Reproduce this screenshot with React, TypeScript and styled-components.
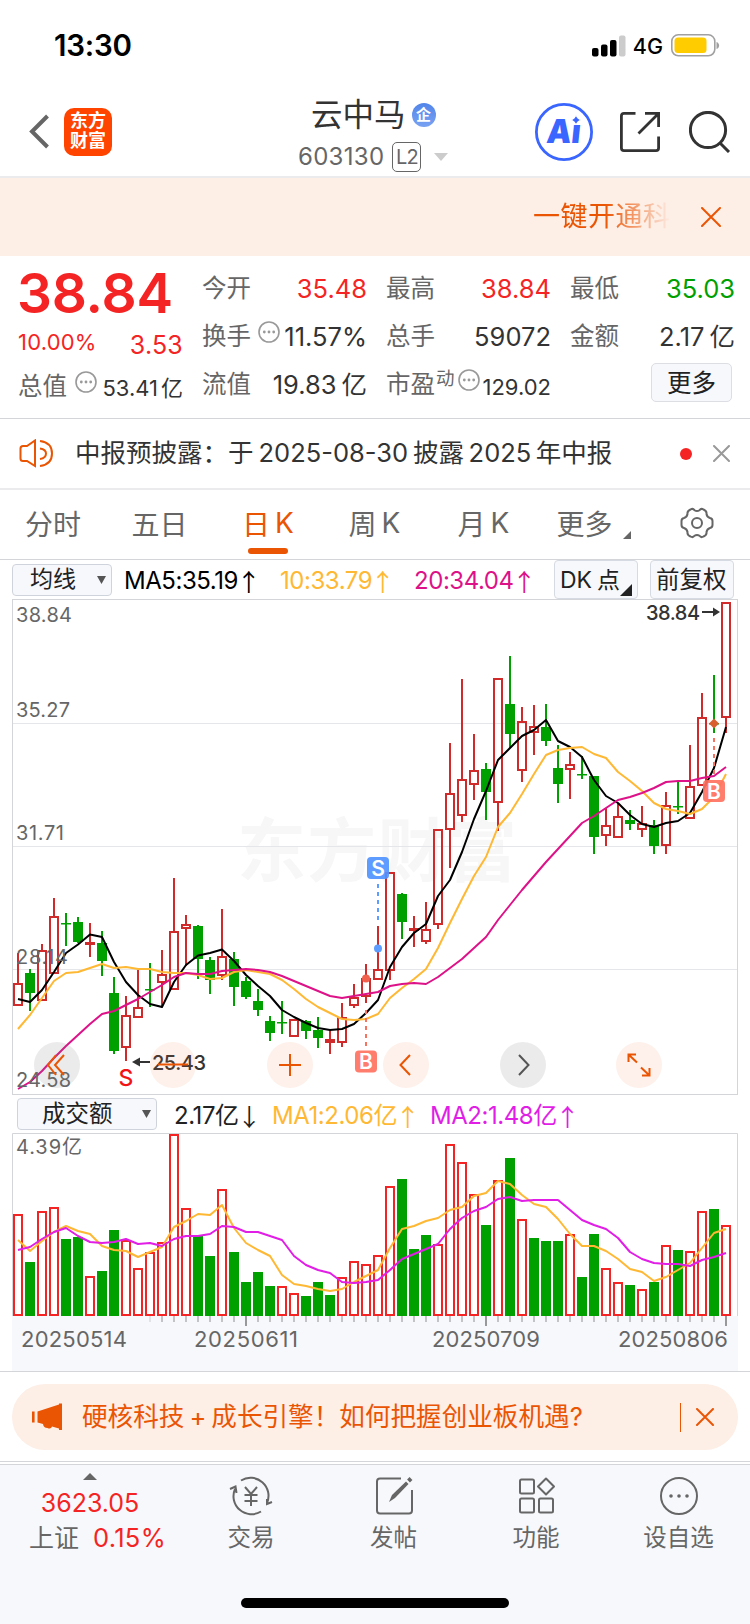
import React from "react";
import styled, { createGlobalStyle } from "styled-components";

const C = {
  red: "#f52424",
  green: "#00a000",
  orange: "#ea5504",
  grey: "#666",
  dark: "#333",
  line: "#d3d5d9",
  panel: "#f7f8fb",
  peach: "#fdeee6",
  amber: "#ffb833",
  pink: "#dd1288",
  violet: "#e01ee6",
};

const Global = createGlobalStyle`
  * { box-sizing: border-box; }
  body { margin: 0; background: #fff; }
  svg { display: block; flex: none; }
`;

const Page = styled.div`
  width: 750px;
  height: 1624px;
  display: flex;
  flex-direction: column;
  background: #fff;
  color: ${C.dark};
  font-family: Inter, "Noto Sans CJK SC", sans-serif;
  overflow: hidden;
`;

const Txt = styled.span<{ $s: number; $c?: string; $w?: number; $ls?: number; $ml?: number; $mt?: number }>`
  display: block;
  flex: none;
  white-space: nowrap;
  line-height: 1.2;
  font-size: ${(p) => p.$s}px;
  color: ${(p) => p.$c ?? C.dark};
  font-weight: ${(p) => p.$w ?? 400};
  letter-spacing: ${(p) => p.$ls ?? 0}px;
  margin-left: ${(p) => p.$ml ?? 0}px;
  margin-top: ${(p) => p.$mt ?? 0}px;
`;

/* a run set off from its neighbours by a small gap where scripts meet */
const Run = styled.span<{ $l?: number; $r?: number }>`
  margin-left: ${(p) => p.$l ?? 0}px;
  margin-right: ${(p) => p.$r ?? 0}px;
`;

/* ---------- status bar ---------- */
const StatusBar = styled.div`
  height: 90px;
  flex: none;
  display: flex;
  align-items: center;
  padding: 2px 30px 0 54px;
`;
const StatusIcons = styled.div`
  margin-left: auto;
  display: flex;
  align-items: center;
`;
const Battery = styled.svg`
  margin-left: 8px;
`;

/* ---------- header ---------- */
const Header = styled.header`
  height: 88px;
  flex: none;
  display: grid;
  grid-template-columns: 260px 1fr 260px;
  border-bottom: 2px solid #ebebed;
`;
const HeaderLeft = styled.div`
  display: flex;
  align-items: center;
  padding: 0 0 2px 28px;
`;
const Logo = styled.div`
  width: 48px;
  height: 48px;
  margin-left: 14px;
  border-radius: 10px;
  background: #ff4400;
  color: #fff;
  font-weight: 700;
  font-size: 18px;
  line-height: 20px;
  text-align: center;
  padding-top: 3px;
`;
const HeaderTitle = styled.div`
  display: flex;
  flex-direction: column;
  align-items: flex-start;
`;
const TitleRow = styled.div`
  display: flex;
  align-items: center;
  height: 50px;
  padding-left: 51px;
`;
const CodeRow = styled.div`
  display: flex;
  align-items: center;
  height: 34px;
  padding-left: 38px;
`;
const Badge = styled.span`
  width: 24px;
  height: 24px;
  margin-left: 6px;
  border-radius: 50%;
  background: linear-gradient(#5285ea, #7aa2f2);
  color: #fff;
  font-weight: 700;
  font-size: 15px;
  line-height: 23px;
  text-align: center;
`;
const LevelTag = styled.span`
  width: 29px;
  height: 30px;
  margin-left: 8px;
  border: 1.5px solid ${C.grey};
  border-radius: 5px;
  color: ${C.grey};
  font-size: 20px;
  letter-spacing: -1px;
  line-height: 28px;
  text-align: center;
`;
const LevelCaret = styled.svg`
  margin-left: 13px;
`;
const HeaderActions = styled.div`
  display: flex;
  align-items: center;
  padding: 0 0 2px 44px;
`;
const ActionIcon = styled.svg<{ $ml: number }>`
  margin-left: ${(p) => p.$ml}px;
`;

/* ---------- marquee banner ---------- */
const Banner = styled.div`
  height: 78px;
  flex: none;
  display: flex;
  align-items: center;
  justify-content: flex-end;
  background: ${C.peach};
  padding-right: 29px;
`;
const Marquee = styled.div`
  width: 138px;
  margin: 1px 30px 0 0;
  overflow: hidden;
  mask-image: linear-gradient(90deg, #000 52%, transparent 100%);
`;

/* ---------- quote ---------- */
const Quote = styled.section`
  height: 163px;
  flex: none;
  display: grid;
  grid-template-columns: 165px 165px 165px 165px;
  column-gap: 19px;
  padding: 9px 15px 0 18px;
  border-bottom: 1px solid ${C.line};
`;
const QuoteMain = styled.div`
  display: flex;
  flex-direction: column;
`;
const QuoteCol = styled.div`
  display: flex;
  flex-direction: column;
`;
const QuoteRow = styled.div<{ $h?: number }>`
  height: ${(p) => p.$h ?? 48}px;
  display: flex;
  align-items: center;
  justify-content: space-between;
`;
const LabelGroup = styled.span`
  display: flex;
  align-items: center;
`;
const DotsIcon = styled.svg<{ $ml: number }>`
  margin: -9px 0 0 ${(p) => p.$ml}px;
`;
const MoreButton = styled.button`
  width: 81px;
  height: 39px;
  margin: -5px 3px 0 auto;
  padding: 0;
  border: 1.5px solid #dcdee3;
  border-radius: 5px;
  background: ${C.panel};
  color: #222;
  font: 24.5px/34px Inter, "Noto Sans CJK SC", sans-serif;
`;

/* ---------- notice ---------- */
const Notice = styled.div`
  height: 71px;
  flex: none;
  display: flex;
  align-items: center;
  padding: 0 20px 0 19px;
  border-bottom: 2px solid #ebebed;
`;
const RedDot = styled.i`
  width: 12px;
  height: 12px;
  border-radius: 50%;
  background: ${C.red};
  margin: 0 21px 0 auto;
`;

/* ---------- tabs ---------- */
const Tabs = styled.nav`
  height: 70px;
  flex: none;
  display: grid;
  grid-template-columns: 106px 107px 110px 110px 106px 105px 106px;
  border-bottom: 1px solid ${C.line};
`;
const Tab = styled.div<{ $on?: boolean; $pr?: number }>`
  position: relative;
  display: flex;
  align-items: center;
  justify-content: center;
  font-size: 28px;
  font-weight: 400;
  padding: 0 ${(p) => p.$pr ?? 0}px 3px 0;
  color: ${(p) => (p.$on ? C.orange : C.grey)};
  &::after {
    content: "";
    display: ${(p) => (p.$on ? "block" : "none")};
    position: absolute;
    left: 50%;
    bottom: 5px;
    width: 40px;
    height: 6px;
    margin-left: -20px;
    border-radius: 3px;
    background: ${C.orange};
  }
`;

/* ---------- chart ---------- */
const IndicatorRow = styled.div<{ $h: number; $pl: number }>`
  height: ${(p) => p.$h}px;
  flex: none;
  display: flex;
  align-items: center;
  padding-left: ${(p) => p.$pl}px;
`;
const Reading = styled.div<{ $c: string; $w: number }>`
  width: ${(p) => p.$w}px;
  flex: none;
  display: flex;
  align-items: center;
  padding-top: 2px;
  white-space: nowrap;
  font-size: 24px;
  line-height: 29px;
  letter-spacing: -0.45px;
  color: ${(p) => p.$c};
`;
const Arrow = styled.span`
  width: 19px;
  margin-left: 1px;
  display: flex;
  justify-content: center;
  font-family: "Noto Sans CJK SC", sans-serif;
  font-size: 24px;
`;
const Select = styled.div<{ $w: number; $p: number; $mr: number }>`
  width: ${(p) => p.$w}px;
  height: 32px;
  flex: none;
  display: flex;
  align-items: center;
  justify-content: space-between;
  margin-right: ${(p) => p.$mr}px;
  padding: 0 5px 0 ${(p) => p.$p}px;
  border: 1px solid #cfd4dc;
  border-radius: 4px;
  background: ${C.panel};
`;
const SquareButton = styled.div<{ $mr?: number }>`
  position: relative;
  width: 84px;
  height: 39px;
  flex: none;
  margin-right: ${(p) => p.$mr ?? 0}px;
  display: flex;
  align-items: center;
  padding: 2px 0 0 5px;
  border: 1px solid #d6dae2;
  border-radius: 4px;
  background: ${C.panel};
`;
const Corner = styled.i<{ $c: string; $s: number; $r: number; $b: number }>`
  position: absolute;
  right: ${(p) => p.$r}px;
  bottom: ${(p) => p.$b}px;
  border-left: ${(p) => p.$s}px solid transparent;
  border-bottom: ${(p) => p.$s}px solid ${(p) => p.$c};
`;
const ChartWrap = styled.div`
  position: relative;
  flex: none;
  padding-left: 12px;
`;
const RoundBar = styled.div`
  position: absolute;
  left: 34px;
  bottom: 7.5px;
  display: flex;
  gap: 70.4px;
`;
const RoundButton = styled.div<{ $grey?: boolean; $pr?: number }>`
  width: 46px;
  height: 46px;
  display: flex;
  align-items: center;
  justify-content: center;
  padding-right: ${(p) => p.$pr ?? 0}px;
  border-radius: 50%;
  background: ${(p) => (p.$grey ? "rgba(120,120,120,.15)" : "rgba(250,120,60,.11)")};
`;

/* ---------- promo + footer ---------- */
const PromoArea = styled.div`
  height: 90px;
  flex: none;
  padding: 12px 12px 0;
  border-top: 1px solid ${C.line};
`;
const Promo = styled.div`
  height: 66px;
  display: flex;
  align-items: center;
  padding: 0 24px 0 19px;
  border-radius: 33px;
  background: ${C.peach};
`;
const PromoDivider = styled.i`
  width: 1.5px;
  height: 29px;
  margin: 0 15px 0 auto;
  background: ${C.orange};
`;
const Footer = styled.footer`
  height: 163px;
  flex: none;
  display: flex;
  flex-direction: column;
  align-items: center;
  border-top: 1px solid ${C.line};
  background: ${C.panel};
  box-shadow: inset 0 2px #fff, inset 0 3px ${C.line};
`;
const FooterItems = styled.div`
  width: 750px;
  height: 136px;
  display: grid;
  grid-template-columns: 180px 142px 143px 142px 143px;
`;
const FooterItem = styled.div`
  display: flex;
  flex-direction: column;
  align-items: center;
  padding-top: 14px;
`;
const IndexItem = styled.div`
  display: flex;
  flex-direction: column;
  align-items: center;
  padding-top: 11px;
`;
const IndexLine = styled.div`
  display: flex;
  align-items: center;
  gap: 14px;
  margin: 5px 0 0 15px;
`;
const HomeBar = styled.div`
  width: 268px;
  height: 10px;
  border-radius: 5px;
  background: #000;
`;

/* ---------- data: [high, bodyTop, bodyBottom, low, rising] ---------- */
type Candle = [number, number, number, number, 0 | 1];
const candles: Candle[] = [
  [953, 983, 1006, 1006, 1], [969, 973, 993, 1011, 0], [944, 950, 1001, 1001, 1], [898, 916, 974, 974, 1],
  [913, 923, 924, 946, 0], [917, 922, 942, 943, 0], [923, 942, 945, 957, 1], [931, 943, 961, 976, 0],
  [977, 993, 1051, 1054, 0], [996, 1015, 1048, 1061, 1], [970, 1007, 1018, 1018, 1], [963, 989, 990, 1007, 0],
  [950, 974, 983, 1006, 1], [878, 931, 990, 990, 1], [915, 924, 929, 966, 1], [925, 926, 959, 979, 0],
  [957, 960, 980, 994, 0], [909, 956, 976, 980, 1], [952, 959, 987, 1006, 0], [977, 981, 997, 999, 0],
  [989, 1001, 1010, 1016, 0], [1016, 1021, 1033, 1041, 0], [1001, 1022, 1023, 1034, 0], [1019, 1019, 1037, 1037, 1],
  [1020, 1021, 1031, 1039, 0], [1017, 1030, 1038, 1048, 0], [1030, 1039, 1043, 1054, 1], [1003, 1017, 1043, 1047, 1],
  [984, 997, 1006, 1008, 1], [964, 978, 997, 1003, 1], [926, 969, 980, 980, 1], [872, 872, 971, 980, 1],
  [893, 894, 922, 939, 0], [916, 928, 931, 947, 1], [902, 929, 942, 944, 1], [829, 829, 925, 929, 1],
  [743, 793, 830, 868, 1], [679, 779, 816, 822, 1], [734, 770, 785, 800, 1], [763, 769, 792, 820, 0],
  [678, 678, 803, 831, 1], [656, 704, 734, 748, 0], [707, 721, 771, 782, 1], [705, 726, 733, 755, 1],
  [704, 727, 741, 746, 0], [745, 768, 784, 803, 0], [752, 764, 770, 799, 1], [756, 774, 775, 779, 0],
  [776, 776, 837, 854, 0], [808, 825, 836, 846, 1], [803, 816, 838, 838, 1], [810, 820, 824, 830, 0],
  [806, 823, 830, 837, 1], [820, 825, 846, 854, 0], [792, 805, 846, 854, 1], [782, 806, 807, 814, 0],
  [745, 786, 819, 819, 1], [693, 717, 786, 786, 1], [675, 723, 724, 733, 0], [602, 602, 718, 733, 1],
];
const ma5 = [999, 1002, 990, 972, 953, 944.5, 934.5, 937, 962, 982, 995, 1004, 1007, 982, 965, 955.5, 953, 949.5, 961, 975, 986, 996, 1010, 1017, 1023, 1028, 1030, 1029, 1024, 1013, 1000, 967, 947, 933, 924, 896, 880, 852, 819, 791, 760, 748, 736, 730, 720, 741, 747, 757, 780, 796, 803, 815, 824, 827, 823, 821, 813, 792, 768, 727];
const ma10 = [1029, 1015, 998, 981, 973, 972, 968, 964, 968, 967, 969, 969, 972, 973, 973, 975, 979, 978, 972, 970, 972, 974, 980, 989, 999, 1007, 1013, 1019, 1020, 1019, 1014, 998, 988, 979, 969, 948, 923, 899, 876, 857, 827, 813, 794, 774, 755, 750, 748, 747, 754, 758, 772, 781, 791, 803, 809, 811, 814, 809, 797, 774];
const ma20 = [1089, 1082, 1071, 1058, 1046, 1035, 1024, 1014, 1011, 1005, 999, 992, 985, 977, 973, 974, 974, 971, 970, 969, 970, 972, 976, 981, 986, 991, 996, 998, 996, 994, 992, 986, 984, 983, 984, 977, 968, 959, 948, 937, 920, 905, 890, 876, 862, 849, 836, 823, 816, 808, 800, 797, 793, 788, 782, 781, 781, 778, 776, 767];

const volTop = [1214, 1262, 1211, 1207, 1239, 1237, 1276, 1271, 1230, 1240, 1268, 1252, 1242, 1134, 1208, 1236, 1256, 1189, 1252, 1282, 1272, 1286, 1286, 1293, 1296, 1282, 1295, 1277, 1261, 1264, 1255, 1186, 1179, 1249, 1235, 1244, 1144, 1162, 1194, 1225, 1180, 1158, 1219, 1238, 1241, 1241, 1234, 1277, 1234, 1268, 1282, 1285, 1289, 1282, 1245, 1250, 1251, 1211, 1209, 1225];
const volFalling = new Set([1, 4, 5, 7, 8, 15, 16, 18, 19, 20, 21, 24, 25, 26, 32, 33, 34, 39, 41, 43, 44, 45, 47, 48, 51, 53, 55, 58]);
const vma1 = [1240, 1251, 1241, 1232, 1226, 1231, 1234, 1246, 1250, 1251, 1257, 1252, 1247, 1227, 1221, 1214, 1215, 1205, 1228, 1243, 1250, 1256, 1275, 1284, 1286, 1289, 1291, 1289, 1282, 1276, 1270, 1248, 1229, 1226, 1221, 1218, 1210, 1207, 1196, 1193, 1181, 1184, 1195, 1204, 1207, 1219, 1234, 1246, 1246, 1251, 1259, 1269, 1272, 1281, 1277, 1270, 1263, 1248, 1233, 1229];
const vma2 = [1250, 1247, 1239, 1232, 1228, 1236, 1242, 1243, 1242, 1239, 1244, 1243, 1246, 1239, 1236, 1236, 1234, 1226, 1227, 1232, 1232, 1236, 1240, 1256, 1265, 1270, 1273, 1282, 1283, 1282, 1280, 1270, 1259, 1254, 1249, 1244, 1229, 1218, 1211, 1207, 1199, 1197, 1201, 1200, 1200, 1200, 1210, 1220, 1225, 1229, 1238, 1252, 1259, 1263, 1264, 1264, 1266, 1260, 1257, 1253];

const xAt = (i: number) => 18 + i * 12;
const pts = (ys: number[]) => ys.map((y, i) => `${xAt(i)},${y}`).join(" ");

function Dots({ ml }: { ml: number }) {
  return (
    <DotsIcon $ml={ml} width="22" height="22" viewBox="0 0 22 22">
      <circle cx="11" cy="11" r="10" fill="none" stroke="#999" strokeWidth="1.6" />
      {[6.3, 11, 15.7].map((x) => <circle key={x} cx={x} cy="11" r="1.4" fill="#999" />)}
    </DotsIcon>
  );
}
function Cross({ s, c, w }: { s: number; c: string; w: number }) {
  return (
    <svg width={s} height={s}>
      <path d={`M1 1L${s - 1} ${s - 1}M${s - 1} 1L1 ${s - 1}`} stroke={c} strokeWidth={w} strokeLinecap="round" />
    </svg>
  );
}
function Caret() {
  return <svg width="9" height="8"><path d="M0 0H9L4.5 8Z" fill="#555" /></svg>;
}

function Tag({ x, y, c, t }: { x: number; y: number; c: string; t: string }) {
  return (
    <g>
      <rect x={x - 11} y={y - 11} width="22" height="22" rx="4" fill={c} opacity=".92" />
      <text x={x} y={y + 7.5} fontSize="21" fontWeight="600" fill="#fff" textAnchor="middle">{t}</text>
    </g>
  );
}

function PriceChart() {
  return (
    <svg width="726" height="496" viewBox="12 599 726 496" fontFamily="Inter, 'Noto Sans CJK SC', sans-serif">
      <text x="237" y="876" fontSize="69" fontWeight="700" fill="#f7f7f7" textLength="280">东方财富</text>
      {[723.5, 846.5, 969.5].map((y) => <path key={y} d={`M12 ${y}H738`} stroke="#e4e6ea" />)}
      <rect x="12.5" y="599.5" width="725" height="495" fill="none" stroke={C.line} />
      {candles.map(([h, t, b, l, up], i) => {
        const x = xAt(i);
        if (up) {
          const thin = b - t < 4;
          return (
            <g key={i} stroke="#d12a2a" strokeWidth="2" fill="none">
              <path d={`M${x} ${h}V${t}M${x} ${b}V${l}`} />
              <rect x={x - 4} y={t + 1} width="8" height={Math.max(b - t - 2, 1)} fill={thin ? "#d12a2a" : "none"} />
            </g>
          );
        }
        return (
          <g key={i} fill={C.green}>
            <rect x={x - 1} y={h} width="2" height={l - h} />
            <rect x={x - 5} y={t} width="10" height={Math.max(b - t, 1.5)} />
          </g>
        );
      })}
      <g fill="none" strokeWidth="2" strokeLinejoin="round">
        <polyline points={pts(ma5)} stroke="#000" />
        <polyline points={pts(ma10)} stroke={C.amber} />
        <polyline points={pts(ma20)} stroke={C.pink} />
      </g>
      <g fontSize="20" fill="#666">
        <text x="16" y="622" textLength="56">38.84</text>
        <text x="16" y="717" textLength="54">35.27</text>
        <text x="16" y="840" textLength="48">31.71</text>
        <text x="16" y="963.5" textLength="52">28.14</text>
        <text x="16" y="1087" textLength="55">24.58</text>
      </g>
      <g fontSize="20" fontWeight="500" fill="#333">
        <text x="646" y="620" textLength="54">38.84</text>
        <text x="152" y="1069.5" textLength="54">25.43</text>
        <path d="M702 612H715" stroke="#333" strokeWidth="2" />
        <path d="M713 607.5L720 612L713 616.5Z" />
        <path d="M138 1062H150" stroke="#333" strokeWidth="2" />
        <path d="M140 1057.5L132 1062L140 1066.5Z" />
      </g>
      <text x="126" y="1085.5" fontSize="23" fontWeight="500" fill="#f21414" textAnchor="middle">S</text>
      <g strokeWidth="2" strokeDasharray="4 4" fill="none">
        <path d="M378 884V920" stroke="#5c9dff" />
        <path d="M366 1010V1048" stroke="#f7735f" />
        <path d="M714 738V778" stroke="#f7735f" />
      </g>
      <circle cx="378" cy="948.5" r="4" fill="#5c9dff" />
      <circle cx="366" cy="978.5" r="4" fill="#f0604c" />
      <path d="M714 718.5L719 723.5L714 728.5L709 723.5Z" fill="#d9602e" />
      <Tag x={378} y={868} c="#5094ff" t="S" />
      <Tag x={366} y={1061.5} c="#ff7261" t="B" />
      <Tag x={714} y={791} c="#ff7261" t="B" />
    </svg>
  );
}

function VolumeChart() {
  return (
    <svg width="726" height="238" viewBox="12 1133 726 238" fontFamily="Inter, 'Noto Sans CJK SC', sans-serif">
      <rect x="12" y="1316" width="726" height="55" fill="#f7f8fb" />
      <path d="M12.5 1316V1133.5H737.5V1316" fill="none" stroke={C.line} />
      {volTop.map((t, i) => {
        const x = xAt(i);
        return volFalling.has(i) ? (
          <rect key={i} x={x - 5} y={t} width="10" height={1316 - t} fill={C.green} />
        ) : (
          <rect key={i} x={x - 4} y={t + 1} width="8" height={1316 - t - 2} fill="none" stroke={C.red} strokeWidth="2" />
        );
      })}
      {volTop.map((_, i) => {
        if (i < 11) return null;
        const major = i === 19 || i === 39 || i === 59;
        return <path key={i} d={`M${xAt(i)} 1316V${major ? 1326 : 1322}`} stroke={major ? "#999" : "#c4c4c6"} strokeWidth="2" opacity={i === 11 ? 0.4 : 1} />;
      })}
      <g fill="none" strokeWidth="2" strokeLinejoin="round">
        <polyline points={pts(vma1)} stroke={C.amber} />
        <polyline points={pts(vma2)} stroke={C.violet} />
      </g>
      <g fill="#666">
        <text x="16" y="1154" fontSize="20" textLength="66">4.39亿</text>
        <g fontSize="22">
          <text x="21" y="1347" textLength="106">20250514</text>
          <text x="194" y="1347" textLength="104">20250611</text>
          <text x="432" y="1347" textLength="108">20250709</text>
          <text x="618" y="1347" textLength="110">20250806</text>
        </g>
      </g>
    </svg>
  );
}

export default function App() {
  return (
    <Page>
      <Global />
      <StatusBar>
        <Txt $s={29.5} $w={600} $c="#000" $ls={-0.2}>13:30</Txt>
        <StatusIcons>
          <svg width="34" height="22">
            <rect x="0" y="13" width="6.5" height="8.5" rx="2" />
            <rect x="9" y="9.5" width="6.5" height="12" rx="2" />
            <rect x="18" y="5" width="6.5" height="16.5" rx="2" />
            <rect x="27" y="0.5" width="6.5" height="21" rx="2" fill="#ccc" />
          </svg>
          <Txt $s={21.5} $w={500} $c="#000" $ml={7} $mt={2}>4G</Txt>
          <Battery width="49" height="23">
            <rect x="0.8" y="0.8" width="43" height="21" rx="6.5" fill="none" stroke="#a0a0a0" strokeWidth="1.6" />
            <rect x="3.5" y="3.5" width="32" height="15.6" rx="3.5" fill="#ffcc00" />
            <path d="M45.5 8C49 9 49 14 45.5 15Z" fill="#a0a0a0" />
          </Battery>
        </StatusIcons>
      </StatusBar>

      <Header>
        <HeaderLeft>
          <svg width="22" height="36"><path d="M19.5 2L4 17.5L19.5 33" fill="none" stroke="#666" strokeWidth="4" /></svg>
          <Logo>东方<br />财富</Logo>
        </HeaderLeft>
        <HeaderTitle>
          <TitleRow><Txt $s={31.5}>云中马</Txt><Badge>企</Badge></TitleRow>
          <CodeRow>
            <Txt $s={24} $c="#666" $ls={0.3}>603130</Txt>
            <LevelTag>L2</LevelTag>
            <LevelCaret width="14" height="8"><path d="M0 0H14L7 8Z" fill="#ccc" /></LevelCaret>
          </CodeRow>
        </HeaderTitle>
        <HeaderActions>
          <svg width="60" height="60" viewBox="0 0 60 60">
            <circle cx="30" cy="30" r="27.6" fill="none" stroke="#3a66ff" strokeWidth="2.8" />
            <text x="16" y="41" fontSize="33" fontWeight="900" fontFamily="Inter" fill="#3a66ff" transform="skewX(-6)" textLength="34" lengthAdjust="spacingAndGlyphs">Aı</text>
            <path d="M42 13Q43 17 47 18Q43 19 42 23Q41 19 37 18Q41 17 42 13Z" fill="#3a66ff" stroke="#fff" strokeWidth="1" />
          </svg>
          <ActionIcon $ml={26} width="40" height="40" viewBox="0 0 40 40" fill="none" stroke="#333" strokeWidth="2.8">
            <path d="M15.5 1.4H4Q1.4 1.4 1.4 4V36Q1.4 38.6 4 38.6H36Q38.6 38.6 38.6 36V24.5" />
            <path d="M25 1.4H38.6V15M38 2L18.5 21.5" />
          </ActionIcon>
          <ActionIcon $ml={29} width="42" height="42" viewBox="0 0 42 42" fill="none" stroke="#333" strokeWidth="3">
            <circle cx="19" cy="19" r="17.6" /><path d="M31 32L40 41" />
          </ActionIcon>
        </HeaderActions>
      </Header>

      <Banner>
        <Marquee><Txt $s={27} $c={C.orange} $ls={0.5}>一键开通科</Txt></Marquee>
        <Cross s={20} c={C.orange} w={2} />
      </Banner>

      <Quote>
        <QuoteMain>
          <Txt $s={55} $w={600} $c={C.red} $mt={-5} $ml={-1} $ls={-0.2}>38.84</Txt>
          <QuoteRow $h={32}><Txt $s={22} $c={C.red} $ls={0.2}>10.00%</Txt><Txt $s={25} $c={C.red} $mt={5} $ls={0.2}>3.53</Txt></QuoteRow>
          <QuoteRow $h={57}>
            <LabelGroup><Txt $s={24.5} $c="#666">总值</Txt><Dots ml={8} /></LabelGroup>
            <Txt $s={22} $mt={4}>53.41<Run $l={3}>亿</Run></Txt>
          </QuoteRow>
        </QuoteMain>
        <QuoteCol>
          <QuoteRow><Txt $s={24.5} $c="#666">今开</Txt><Txt $s={25.5} $c={C.red}>35.48</Txt></QuoteRow>
          <QuoteRow><LabelGroup><Txt $s={24.5} $c="#666">换手</Txt><Dots ml={7} /></LabelGroup><Txt $s={25.5}>11.57%</Txt></QuoteRow>
          <QuoteRow><Txt $s={24.5} $c="#666">流值</Txt><Txt $s={25.5}>19.83<Run $l={5}>亿</Run></Txt></QuoteRow>
        </QuoteCol>
        <QuoteCol>
          <QuoteRow><Txt $s={24.5} $c="#666">最高</Txt><Txt $s={25.5} $c={C.red}>38.84</Txt></QuoteRow>
          <QuoteRow><Txt $s={24.5} $c="#666">总手</Txt><Txt $s={25.5}>59072</Txt></QuoteRow>
          <QuoteRow><LabelGroup><Txt $s={24.5} $c="#666">市盈</Txt><Txt $s={18.5} $c="#666" $mt={-14} $ml={1}>动</Txt><Dots ml={3} /></LabelGroup><Txt $s={22} $mt={4}>129.02</Txt></QuoteRow>
        </QuoteCol>
        <QuoteCol>
          <QuoteRow><Txt $s={24.5} $c="#666">最低</Txt><Txt $s={25.5} $c={C.green}>35.03</Txt></QuoteRow>
          <QuoteRow><Txt $s={24.5} $c="#666">金额</Txt><Txt $s={25.5}>2.17<Run $l={5}>亿</Run></Txt></QuoteRow>
          <QuoteRow><MoreButton>更多</MoreButton></QuoteRow>
        </QuoteCol>
      </Quote>

      <Notice>
        <svg width="35" height="30" viewBox="0 0 35 30" fill="none" stroke={C.orange} strokeWidth="2">
          <path d="M16 1.500V27L8 22H4Q1.500 22 1.500 19.500V9.500Q1.500 7 4 7H8Z" />
          <path d="M21 9.500Q27 10.500 27 14.500Q27 19 21 20" /><path d="M21 2Q33 3.500 33 14.500Q33 25.500 21 27" />
        </svg>
        <Txt $s={25.5} $ml={21}>中报预披露：于<Run $l={5} $r={5}>2025-08-30</Run>披露<Run $l={4.5} $r={4.5}>2025</Run>年中报</Txt>
        <RedDot />
        <Cross s={17} c="#999" w={2} />
      </Notice>

      <Tabs>
        <Tab>分时</Tab><Tab>五日</Tab><Tab $on>日<Run $l={5}>K</Run></Tab><Tab $pr={7}>周<Run $l={5}>K</Run></Tab><Tab $pr={5}>月<Run $l={5}>K</Run></Tab>
        <Tab $pr={14}>更多<Corner $c="#666" $s={8.5} $r={13} $b={20} /></Tab>
        <Tab>
          <svg width="34" height="32" viewBox="0 0 34 32" fill="none" stroke="#666" strokeWidth="2" strokeLinejoin="round">
            <path d="M10.5 2.5Q13 1 14.5 3.2Q17 5 19.5 3.2Q21 1 23.5 2.5Q27 4 26.5 7Q27 10 30 11Q32.5 11.5 32.5 14V18Q32.5 20.5 30 21Q27 22 26.5 25Q27 28 23.5 29.5Q21 31 19.5 28.8Q17 27 14.5 28.8Q13 31 10.5 29.5Q7 28 7.5 25Q7 22 4 21Q1.5 20.5 1.5 18V14Q1.5 11.5 4 11Q7 10 7.5 7Q7 4 10.5 2.5Z" />
            <circle cx="17" cy="16" r="5" />
          </svg>
        </Tab>
      </Tabs>

      <IndicatorRow $h={39} $pl={12}>
        <Select $w={100} $p={17} $mr={12}><Txt $s={23} $c="#222">均线</Txt><Caret /></Select>
        <Reading $c="#000" $w={156}>MA5:35.19<Arrow>↑</Arrow></Reading>
        <Reading $c={C.amber} $w={134}>10:33.79<Arrow>↑</Arrow></Reading>
        <Reading $c={C.pink} $w={140}>20:34.04<Arrow>↑</Arrow></Reading>
        <SquareButton $mr={12}><Txt $s={23} $c="#222">DK<Run $l={5}>点</Run></Txt><Corner $c="#222" $s={12} $r={5} $b={2} /></SquareButton>
        <SquareButton><Txt $s={23.5} $c="#222">前复权</Txt></SquareButton>
      </IndicatorRow>
      <ChartWrap>
        <PriceChart />
        <RoundBar>
          <RoundButton $grey $pr={2}><svg width="20" height="24" fill="none" stroke={C.orange} strokeWidth="2"><path d="M10 2L2 12L10 22M18 2L9 12L18 22" /></svg></RoundButton>
          <RoundButton><svg width="30" height="3"><path d="M0 1.5H30" stroke={C.orange} strokeWidth="2" /></svg></RoundButton>
          <RoundButton><svg width="22" height="22"><path d="M0 11H22M11 0V22" stroke={C.orange} strokeWidth="2" /></svg></RoundButton>
          <RoundButton><svg width="14" height="22" fill="none" stroke={C.orange} strokeWidth="2"><path d="M11 1L1.5 11L11 21" /></svg></RoundButton>
          <RoundButton $grey><svg width="14" height="22" fill="none" stroke="#555" strokeWidth="2"><path d="M3 1L12.5 11L3 21" /></svg></RoundButton>
          <RoundButton><svg width="24" height="24" fill="none" stroke={C.orange} strokeWidth="2"><path d="M1.5 9V1.5H9M1.5 1.5L10 9.5M22.5 15V22.5H15M22.5 22.5L14 14.5" /></svg></RoundButton>
        </RoundBar>
      </ChartWrap>
      <IndicatorRow $h={38} $pl={17}>
        <Select $w={140} $p={24} $mr={17}><Txt $s={23.5} $c="#222">成交额</Txt><Caret /></Select>
        <Reading $c="#222" $w={98}>2.17亿<Arrow>↓</Arrow></Reading>
        <Reading $c={C.amber} $w={158}>MA1:2.06亿<Arrow>↑</Arrow></Reading>
        <Reading $c={C.violet} $w={158}>MA2:1.48亿<Arrow>↑</Arrow></Reading>
      </IndicatorRow>
      <ChartWrap><VolumeChart /></ChartWrap>

      <PromoArea>
        <Promo>
          <svg width="31" height="28" viewBox="0 0 31 28" fill={C.orange}>
            <rect x="1" y="8.5" width="2.6" height="11" />
            <path d="M6.5 8.5L28 1.5V0.5H31V27H28V25.5L21 23.5Q20 26.5 16.5 25Q12.5 25 12 21L6.5 19.5Z" />
          </svg>
          <Txt $s={25.6} $c={C.orange} $ml={20}>硬核科技<Run $l={5} $r={5}>+</Run>成长引擎！如何把握创业板机遇?</Txt>
          <PromoDivider />
          <Cross s={18} c={C.orange} w={2} />
        </Promo>
      </PromoArea>

      <Footer>
        <FooterItems>
          <IndexItem>
            <svg width="14" height="7"><path d="M0 7L7 0L14 7Z" fill="#666" /></svg>
            <Txt $s={25} $c={C.red} $mt={8}>3623.05</Txt>
            <IndexLine><Txt $s={25} $c="#666">上证</Txt><Txt $s={25.5} $c={C.red} $ls={0.3}>0.15%</Txt></IndexLine>
          </IndexItem>
          <FooterItem>
            <svg width="46" height="40" viewBox="0 0 46 40" fill="none" stroke="#666" strokeWidth="2">
              <path d="M13 4.5A18 18 0 0 1 39 27M33 35.5A18 18 0 0 1 7 13M2 13L7.5 10.5L8.5 17M39 23L39 28L44 26" />
              <path d="M17 11L23 18L29 11M23 18V30M16.5 19H29.5M16.5 25H29.5" />
            </svg>
            <Txt $s={23.5} $c="#666" $mt={8}>交易</Txt>
          </FooterItem>
          <FooterItem>
            <svg width="40" height="40" viewBox="0 0 40 40" fill="none" stroke="#666" strokeWidth="2">
              <path d="M27 2.5H6Q3 2.5 3 5.5V34.5Q3 37.5 6 37.5H35Q38 37.5 38 34.5V14" />
              <path d="M15 26L18 19L32 5.5L34.5 8L21 22Z" fill="#666" stroke="none" />
              <path d="M34.5 5L37 2.5" strokeWidth="4" />
            </svg>
            <Txt $s={23.5} $c="#666" $mt={8}>发帖</Txt>
          </FooterItem>
          <FooterItem>
            <svg width="40" height="40" viewBox="0 0 40 40" fill="none" stroke="#666" strokeWidth="2">
              <rect x="4" y="3.5" width="14" height="14" rx="1.5" />
              <rect x="4" y="22.5" width="14" height="14" rx="1.5" />
              <rect x="23" y="22.5" width="14" height="14" rx="1.5" />
              <path d="M30 2.5L38 10.5L30 18.5L22 10.5Z" strokeLinejoin="round" />
            </svg>
            <Txt $s={23.5} $c="#666" $mt={8}>功能</Txt>
          </FooterItem>
          <FooterItem>
            <svg width="40" height="40" viewBox="0 0 40 40">
              <circle cx="20" cy="20" r="18" fill="none" stroke="#666" strokeWidth="2" />
              {[12, 20, 28].map((x) => <circle key={x} cx={x} cy="20" r="1.8" fill="#666" />)}
            </svg>
            <Txt $s={23.5} $c="#666" $mt={8}>设自选</Txt>
          </FooterItem>
        </FooterItems>
        <HomeBar />
      </Footer>
    </Page>
  );
}
